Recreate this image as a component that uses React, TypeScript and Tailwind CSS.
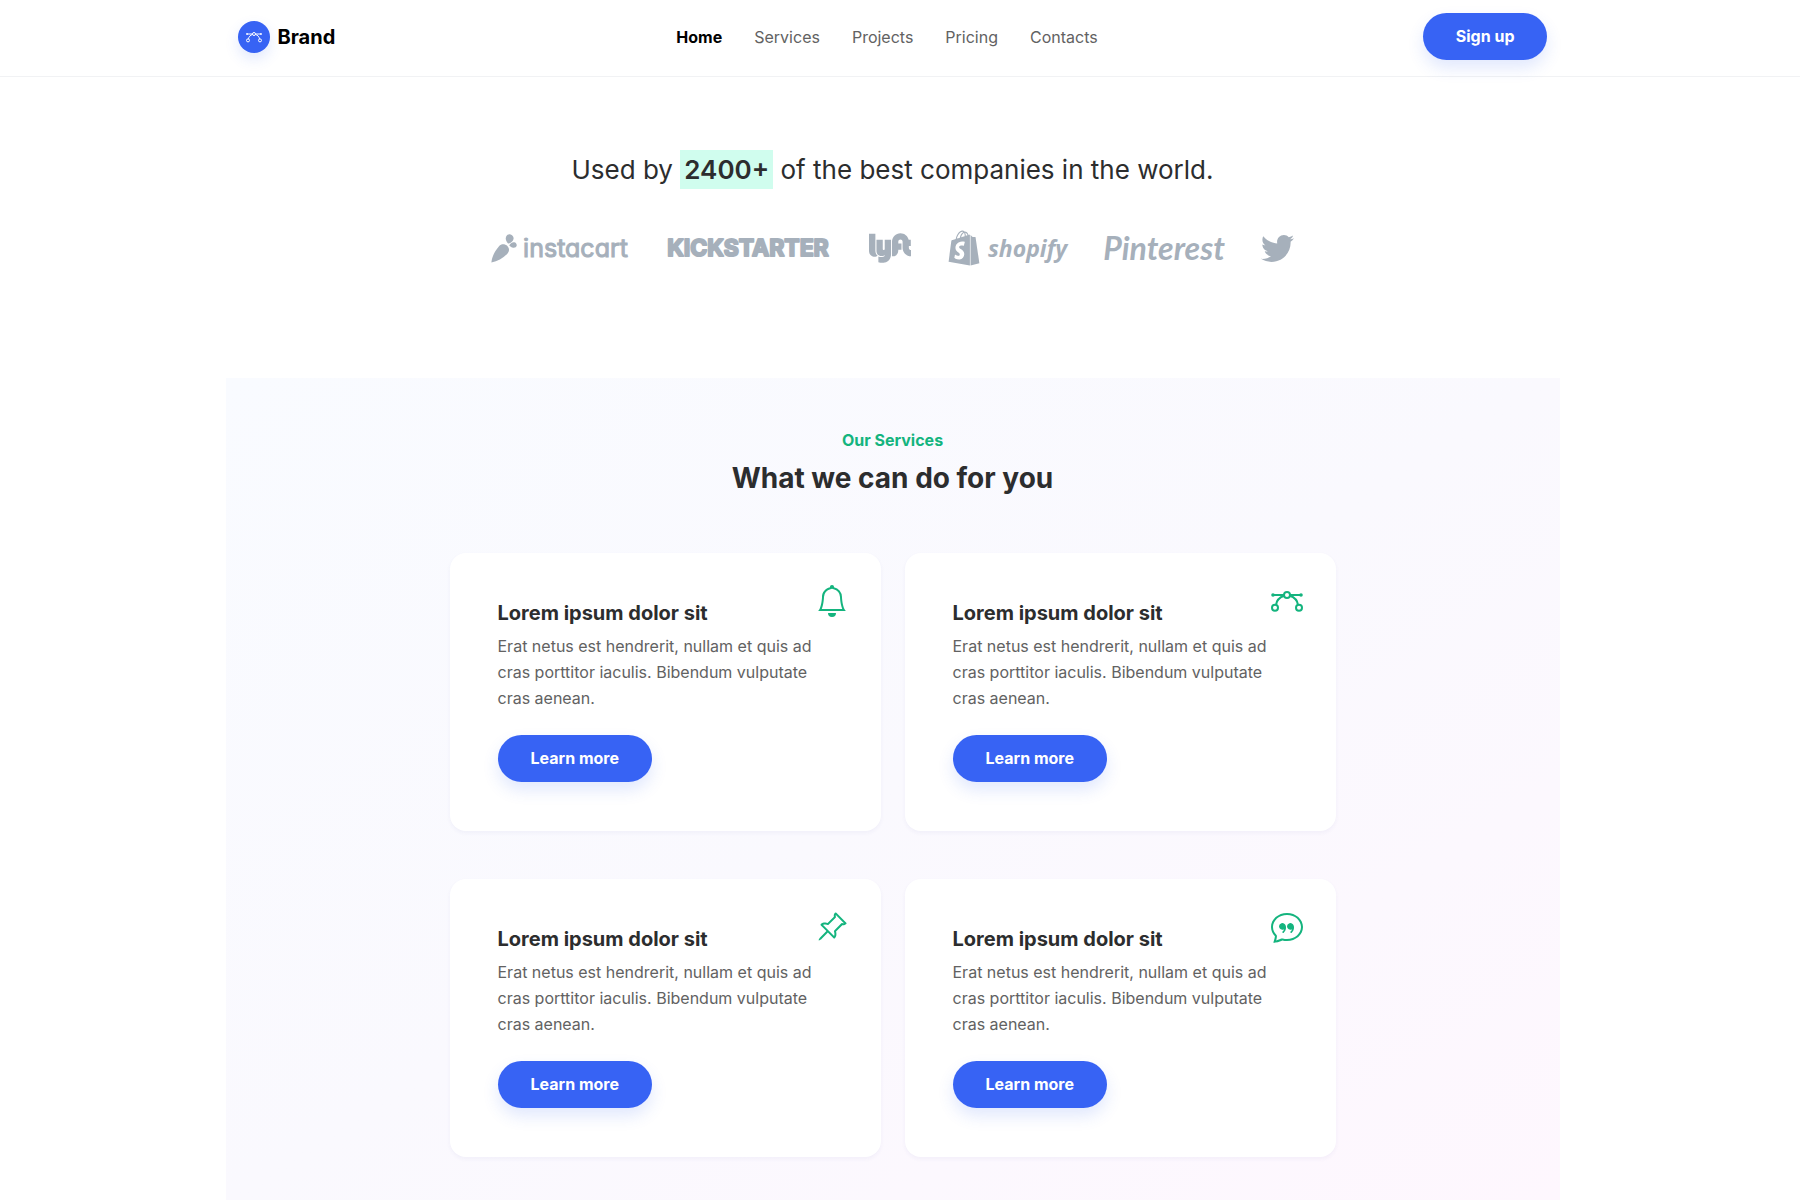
import type { ComponentType } from "react";
import { BsBell, BsChatQuote, BsPinAngle } from "react-icons/bs";
import { FaLyft, FaShopify, FaTwitter } from "react-icons/fa";

const NAV_LINKS = ["Home", "Services", "Projects", "Pricing", "Contacts"];

const SERVICES: { id: string; Icon: ComponentType<{ className?: string }> }[] = [
  { id: "alerts", Icon: BsBell },
  { id: "design", Icon: BezierIcon },
  { id: "pins", Icon: BsPinAngle },
  { id: "quotes", Icon: BsChatQuote },
];

function BezierIcon({ className }: { className?: string }) {
  return (
    <svg viewBox="0 0 16 16" className={className} fill="none" stroke="currentColor">
      <circle cx="8" cy="5" r="1.5" />
      <circle cx="2" cy="11.4" r="1.5" />
      <circle cx="14" cy="11.4" r="1.5" />
      <path d="M1 5h5.500M9.500 5H15M6.600 5.400C4.200 6.200 2.800 7.800 2.500 9.900M9.400 5.400c2.400.8 3.800 2.400 4.100 4.500" />
      <circle cx="1" cy="5" r="0.9" fill="currentColor" stroke="none" />
      <circle cx="15" cy="5" r="0.9" fill="currentColor" stroke="none" />
    </svg>
  );
}

function PillButton({ label }: { label: string }) {
  return (
    <button className="rounded-full bg-[#3763f4] px-[33px] py-3 leading-[23px] font-bold text-white shadow-[0_8px_16px_rgba(55,99,244,0.15)]">
      {label}
    </button>
  );
}

function Header() {
  return (
    <header className="border-b border-[#f1f2f4] pr-[15px]">
      <div className="mx-auto flex max-w-[1334px] items-center justify-between px-3 pt-[13px] pb-4">
        <a href="#" className="flex items-center gap-2 pr-4 text-xl font-bold text-black">
          <span className="flex size-8 items-center justify-center rounded-full bg-[#3763f4] text-white shadow-[0_6px_14px_rgba(55,99,244,0.15)]">
            <BezierIcon className="size-4" />
          </span>
          Brand
        </a>
        <nav className="flex gap-8">
          {NAV_LINKS.map((link, index) => (
            <a
              key={link}
              href="#"
              className={index === 0 ? "font-bold text-black" : "text-[#626262]"}
            >
              {link}
            </a>
          ))}
        </nav>
        <PillButton label="Sign up" />
      </div>
    </header>
  );
}

function Logos() {
  return (
    <div className="flex flex-wrap items-center justify-center gap-x-9 gap-y-4 text-[#a6b0bb]">
      <span className="flex items-center gap-[6px]">
        <svg viewBox="0 0 26 30" className="h-[30px] w-[26px]" fill="currentColor">
          <path d="M.4 29.600C.8 24 3.500 18.500 8 13.200c2.200-2.400 5.600-2.600 8.100-.4 2.500 2.300 2.500 5.600.2 8C11.800 25.200 6.600 28.300.4 29.600Z" />
          <path d="M17 10.600c-2-2.400-2.800-4.700-1.800-7.200C16.200 1.200 18.700.6 20.700 1.900c2 1.400 2.300 3.500 1.200 5.500-.9 1.500-2.600 2.600-4.900 3.200Z" />
          <path d="M18.200 12.200c1.600-2.400 3.600-3.500 5.300-2.900 1.700.6 2.500 2 2.200 3.500-.4 1.500-1.900 2.200-3.600 1.900-1.400-.3-2.700-1.100-3.900-2.500Z" />
        </svg>
        <span className="font-['Inter'] text-[25px] leading-9 [font-feature-settings:'cv11'] [-webkit-text-stroke:1px_#a6b0bb]">
          instacart
        </span>
      </span>
      <svg
        viewBox="0 0 168 30"
        className="h-[30px] w-[168px] font-['Inter'] text-[23px] font-bold"
        fill="currentColor"
        stroke="currentColor"
        strokeWidth="2"
        strokeLinejoin="round"
      >
        <text x="84" y="23" textAnchor="middle">
          KICKSTARTER
        </text>
      </svg>
      <FaLyft className="h-[42px] w-11" />
      <span className="flex items-center gap-2">
        <FaShopify className="h-[36px] w-8" />
        <span className="font-['Open_Sans'] text-[23px] leading-9 font-bold italic">shopify</span>
      </span>
      <span className="font-['Lato'] text-[32px] leading-9 font-bold italic">Pinterest</span>
      <FaTwitter className="size-[33px]" />
    </div>
  );
}

export default function App() {
  return (
    <div className="min-h-screen bg-white font-['Inter',sans-serif] text-base text-[#2c2d2e]">
      <Header />
      <main className="pr-[15px]">
        <section className="pt-[73px] pb-[109px]">
          <h2 className="mb-[38px] text-center text-[26px] leading-[39px]">
            Used by{" "}
            <strong className="inline-block bg-[#d0fdee] px-1 font-semibold">2400+</strong> of
            the best companies in the world.
          </h2>
          <Logos />
        </section>

        <section className="mx-auto max-w-[1334px] bg-linear-to-br from-[#f9fbff] via-[#faf9fe] to-[#fef7fe] pt-[50px] pb-12">
          <div className="mb-[55px] text-center">
            <p className="mb-[6px] font-bold text-[#14b47e]">Our Services</p>
            <h1 className="text-[28px] leading-10 font-bold">What we can do for you</h1>
          </div>
          <div className="mx-auto grid max-w-[886px] grid-cols-2 gap-x-6 gap-y-12">
            {SERVICES.map(({ id, Icon }) => (
              <article
                key={id}
                className="relative rounded-2xl bg-white px-12 pt-12 pb-[49px] shadow-[0_2px_4px_rgba(55,60,160,0.05)]"
              >
                <Icon className="absolute top-8 right-[33px] size-8 text-[#14b47e]" />
                <h3 className="mb-2 text-xl leading-6 font-bold">Lorem ipsum dolor sit</h3>
                <p className="mb-6 leading-[26px] text-[#626262]">
                  Erat netus est hendrerit, nullam et quis ad cras porttitor iaculis. Bibendum
                  vulputate cras aenean.
                </p>
                <PillButton label="Learn more" />
              </article>
            ))}
          </div>
        </section>
      </main>
    </div>
  );
}
